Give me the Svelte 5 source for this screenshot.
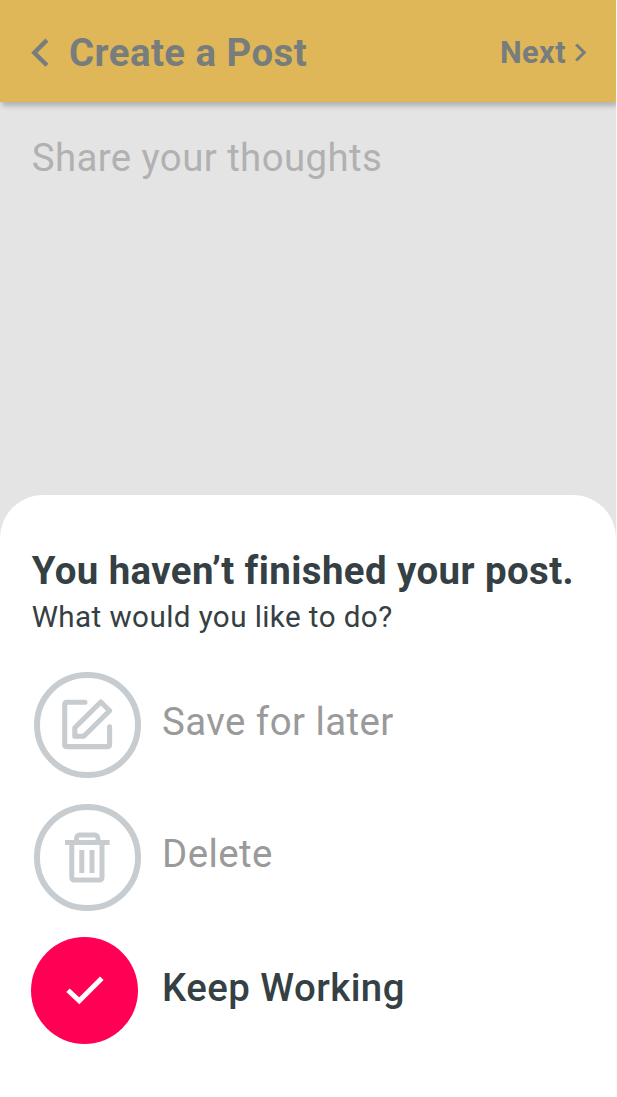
<script>
  const options = [
    { id: 'save', label: 'Save for later' },
    { id: 'delete', label: 'Delete' },
    { id: 'keep', label: 'Keep Working' }
  ];
</script>

<div class="screen">
  <header>
    <button class="back" aria-label="Back">
      <svg width="18" height="30" viewBox="0 0 18 30" fill="none" stroke="#777c7d" stroke-width="4.4"><path d="M15.9 2.1 3.3 14.7l12.6 12.6" /></svg>
    </button>
    <h1>Create a Post</h1>
    <button class="next">
      <span>Next</span>
      <svg width="12" height="20" viewBox="0 0 12 20" fill="none" stroke="#777c7d" stroke-width="3.1"><path d="m1.2 1.5 8 8-8 8" /></svg>
    </button>
  </header>
  <main>
    <p class="placeholder">Share your thoughts</p>
  </main>
  <section class="sheet">
    <h2>You haven’t finished your post.</h2>
    <p class="question">What would you like to do?</p>
    <div class="options">
      {#each options as option}
        <button class="option {option.id}">
          <span class="disc">
            {#if option.id === 'save'}
              <svg width="52" height="52" viewBox="0 0 52 52" fill="none" stroke="#c7ccd0" stroke-width="5.1" stroke-linecap="round" stroke-linejoin="round">
                <path d="M23 3.3H4.4A1.7 1.7 0 0 0 2.7 5v40.9a1.7 1.7 0 0 0 1.7 1.7h41.5a1.7 1.7 0 0 0 1.7-1.7V27.8" />
                <path d="M38.8 3 47.6 11.7 21.8 37.2h-9v-8.4Z" />
              </svg>
            {:else if option.id === 'delete'}
              <svg width="46" height="54" viewBox="0 -1 46 54" fill="none" stroke="#c7ccd0" stroke-width="5">
                <path d="M0 11.5h44.6" stroke-width="5" />
                <path d="M11.5 11.5V7A3 3 0 0 1 14.5 4H30A3 3 0 0 1 33 7v4.5" stroke-width="4.8" />
                <path d="M6.8 11.5v35.3a2.3 2.3 0 0 0 2.3 2.3h25.6a2.3 2.3 0 0 0 2.3-2.3V11.5" />
                <path d="M16.8 19v23M27 19v23" />
              </svg>
            {:else}
              <svg width="38" height="30" viewBox="0 0 38 30" fill="none" stroke="#fff" stroke-width="5"><path d="m2 15.2 11.3 10.6L35.8 3.2" /></svg>
            {/if}
          </span>
          <span class="label">{option.label}</span>
        </button>
      {/each}
    </div>
  </section>
</div>

<style>
  :global(body) { background: #fafafa; }
  .screen {
    box-sizing: border-box;
    width: 616px;
    height: 1097px;
    display: flex;
    flex-direction: column;
    overflow: hidden;
    background: #e4e4e4;
    font-family: Roboto, sans-serif;
    letter-spacing: .42px;
  }
  h1, h2, p { margin: 0; white-space: nowrap; }
  button { border: 0; padding: 0; background: none; font: inherit; color: inherit; text-align: left; letter-spacing: inherit; }
  svg { display: block; flex: none; }
  header {
    box-sizing: border-box;
    height: 102px;
    flex: none;
    display: flex;
    align-items: center;
    padding: 3px 29px 0 31px;
    background: #dfb758;
    color: #777c7d;
    box-shadow: 2px 4px 5px rgba(0, 0, 0, .22);
    letter-spacing: .45px;
  }
  .back { margin-right: 20px; }
  h1 { font-size: 38.4px; line-height: 46px; font-weight: 700; }
  .next { display: flex; align-items: center; gap: 9px; margin-left: auto; font-size: 30.7px; line-height: 36px; font-weight: 700; }
  main { height: 393px; flex: none; }
  .placeholder { padding: 33px 0 0 31.7px; font-size: 38.4px; line-height: 46px; color: #b1b1b1; }
  .sheet {
    box-sizing: border-box;
    flex: 1;
    padding: 53px 32px 0 31.7px;
    background: #fff;
    border-radius: 43px 43px 0 0;
    color: #344044;
  }
  h2 { font-size: 38.4px; line-height: 46px; font-weight: 700; }
  .question { margin-top: 5px; font-size: 29.6px; line-height: 36px; }
  .options { display: flex; flex-direction: column; gap: 25.9px; margin-top: 37px; }
  .option { display: flex; align-items: center; height: 106.4px; color: #9a9a9a; }
  .disc {
    box-sizing: border-box;
    width: 106.5px;
    height: 106.5px;
    display: grid;
    place-items: center;
    flex: none;
    margin-left: 2.8px;
    border: 6px solid #c7ccd0;
    border-radius: 50%;
  }
  .keep .disc { width: 107px; height: 107px; margin-left: -.3px; margin-right: 2.6px; border: 0; background: #ff0055; }
  .keep { height: 107px; }
  .label { margin: -6px 0 0 21px; font-size: 38.4px; line-height: 46px; letter-spacing: .45px; }
  .delete .label { margin-top: -6.5px; }
  .keep { color: #344044; }
  .keep .label { margin-top: -4px; font-weight: 500; }
</style>
